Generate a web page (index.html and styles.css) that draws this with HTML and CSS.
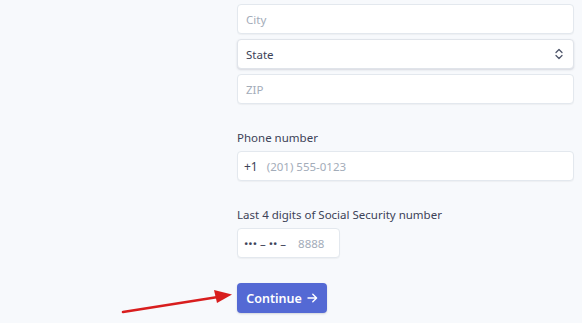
FILE: index.html
```html
<!DOCTYPE html>
<html lang="en">
<head>
<meta charset="utf-8">
<link rel="stylesheet" href="styles.css">
</head>
<body>
<div class="page">
  <form class="form">
    <div class="stack">
      <div class="field"><span class="ph">City</span></div>
      <div class="field select"><span class="val">State</span>
        <svg class="chev" width="8" height="12" viewBox="0 0 8 12"><path d="M1 4.5 L4 1.5 L7 4.5 M1 7.5 L4 10.5 L7 7.5" fill="none" stroke="#4f566b" stroke-width="1.3" stroke-linecap="round" stroke-linejoin="round"/></svg>
      </div>
      <div class="field"><span class="ph">ZIP</span></div>
    </div>

    <div class="group phone-group">
      <div class="label">Phone number</div>
      <div class="field phone"><span class="val prefix">+1</span><span class="ph">(201) 555-0123</span></div>
    </div>

    <div class="group">
      <div class="label">Last 4 digits of Social Security number</div>
      <div class="field ssn"><span class="val mask">••• – •• –</span><span class="ph">8888</span></div>
    </div>

    <div class="actions">
      <button type="button" class="btn"><span>Continue</span>
        <svg class="btn-arrow" width="11" height="10" viewBox="0 0 11 10"><path d="M1 5 H9.5 M5.8 1.2 L9.6 5 L5.8 8.8" fill="none" stroke="#fff" stroke-width="1.4" stroke-linecap="round" stroke-linejoin="round"/></svg>
      </button>
    </div>
  </form>
  <svg class="annot" width="130" height="30" viewBox="0 0 130 30">
    <line x1="3" y1="28" x2="98" y2="13" stroke="#d81e1e" stroke-width="2.6" stroke-linecap="round"/>
    <polygon points="112,10.5 94,6 97,19" fill="#d81e1e"/>
  </svg>
</div>
</body>
</html>
```
FILE: styles.css
```css
* { box-sizing: border-box; }
html, body { margin: 0; padding: 0; }
body {
  background: #f7f9fc;
  font-family: "Noto Sans", "Open Sans", sans-serif;
  color: #3c4257;
  width: 582px;
  height: 323px;
  overflow: hidden;
}
.page { position: relative; height: 323px; }
.form {
  margin-left: 237px;
  width: 337px;
  padding-top: 4px;
  display: flex;
  flex-direction: column;
}
.stack { display: flex; flex-direction: column; gap: 5px; }
.field {
  height: 30px;
  background: #fff;
  border: 1px solid #e3e8ee;
  border-radius: 4px;
  box-shadow: 0 1px 1px rgba(0,0,0,0.04);
  display: flex;
  align-items: center;
  padding: 0 10px 0 8px;
  font-size: 11.5px;
}
.select {
  justify-content: space-between;
  box-shadow: 0 1px 2px rgba(60,66,87,0.18);
  border-color: #e0e4ea;
}
.ph { color: #a3acb9; }
.val { color: #3c4257; }
.phone { padding-left: 6px; }
.prefix { margin-right: 9px; font-size: 12px; }
.chev { display: block; }
.group { margin-top: 26px; display: flex; flex-direction: column; }
.label {
  font-size: 11.5px;
  line-height: 16px;
  color: #3c4257;
  margin-bottom: 5px;
}
.ssn { width: 103px; padding-left: 6px; }
.mask { font-size: 11.5px; margin-right: 12px; letter-spacing: 0; }
.actions { margin-top: 25px; display: flex; }
.btn {
  height: 30px;
  width: 90px;
  border: none;
  border-radius: 4px;
  background: #5469d4;
  color: #fff;
  font-family: "Noto Sans", "Open Sans", sans-serif;
  font-weight: 600;
  font-size: 12.5px;
  padding: 0;
  display: flex;
  align-items: center;
  justify-content: center;
  gap: 5px;
  box-shadow: 0 1px 2px rgba(60,66,87,0.2);
}
.btn-arrow { display: block; }
.annot { position: absolute; left: 120px; top: 284px; }
```
